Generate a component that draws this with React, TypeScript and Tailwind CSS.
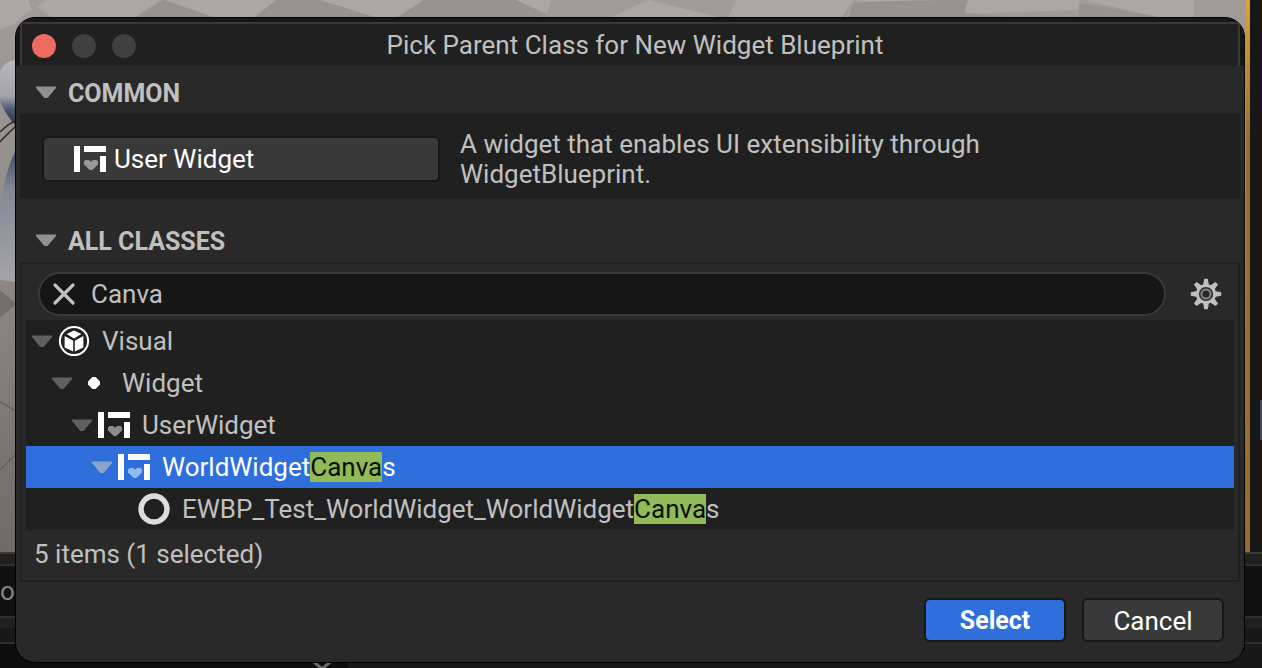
import { useState } from "react";
import type { ReactNode } from "react";

type IconKind = "visual" | "dot" | "widget" | "ring";

function Triangle({ className }: { className: string }) {
  return (
    <svg viewBox="0 0 20 13" className={`h-[13px] w-5 shrink-0 ${className}`} fill="currentColor" aria-hidden="true">
      <path d="M0 0.5H20V2L11.6 12H8.4L0 2Z" />
    </svg>
  );
}

function WidgetIcon({ heart }: { heart: string }) {
  return (
    <svg viewBox="0 0 32 26" className="h-[26px] w-8 shrink-0" aria-hidden="true">
      <path fill="#fff" d="M0 0H6V26H0ZM10 0H32V6H10ZM26 10H32V26H26Z" />
      <path
        className={heart}
        fill="currentColor"
        d="M11.4 14H15L17 15.8L19 14H22.6L24 15.6V18.4L18.2 24H15.8L10 18.4V15.6Z"
      />
    </svg>
  );
}

function VisualIcon() {
  return (
    <svg viewBox="0 0 32 32" className="size-8 shrink-0" aria-hidden="true">
      <circle cx="16" cy="16" r="14.1" fill="none" stroke="#fff" strokeWidth="2" />
      <path fill="#fff" d="M16 5.4L23.4 9L16 13.4L8.6 9Z" />
      <path fill="#fff" d="M6.6 11L15.2 15.8V26.6L6.6 22.4Z" />
      <path fill="#fff" d="M25.4 11L16.8 15.8V26.6L25.4 22.4Z" />
    </svg>
  );
}

function RowIcon({ kind, selected }: { kind: IconKind; selected: boolean }) {
  if (kind === "visual") return <VisualIcon />;
  if (kind === "widget") return <WidgetIcon heart={selected ? "text-[#8fbcf5]" : "text-[#8c8c8c]"} />;
  if (kind === "dot")
    return (
      <svg viewBox="0 0 32 32" className="size-8 shrink-0" aria-hidden="true">
        <path fill="#fff" d="M14.4 10H17.6L22 14.4V17.6L17.6 22H14.4L10 17.6V14.4Z" />
      </svg>
    );
  return (
    <svg viewBox="0 0 32 32" className="size-8 shrink-0" aria-hidden="true">
      <circle cx="16" cy="16" r="13" fill="none" stroke="#dedce0" strokeWidth="5.4" />
    </svg>
  );
}

function GearIcon() {
  const teeth = [0, 45, 90, 135, 180, 225, 270, 315];
  return (
    <svg viewBox="0 0 32 32" className="size-8" aria-hidden="true">
      <g fill="#c0c0c0">
        {teeth.map((a) => (
          <path key={a} transform={`rotate(${a} 16 16)`} d="M14.2 0.8H17.8L19 7.4H13Z" />
        ))}
      </g>
      <circle cx="16" cy="16" r="8.6" fill="#292929" stroke="#c0c0c0" strokeWidth="3" />
      <circle cx="16" cy="16" r="4.6" fill="none" stroke="#858585" strokeWidth="2" />
    </svg>
  );
}

const rows: { name: string; depth: string; icon: IconKind; leaf?: boolean }[] = [
  { name: "Visual", depth: "pl-[6px]", icon: "visual" },
  { name: "Widget", depth: "pl-[26px]", icon: "dot" },
  { name: "UserWidget", depth: "pl-[46px]", icon: "widget" },
  { name: "WorldWidgetCanvas", depth: "pl-[66px]", icon: "widget" },
  { name: "EWBP_Test_WorldWidget_WorldWidgetCanvas", depth: "pl-[86px]", icon: "ring", leaf: true },
];

function highlight(name: string, query: string): ReactNode {
  const at = query ? name.indexOf(query) : -1;
  if (at < 0) return name;
  return (
    <>
      {name.slice(0, at)}
      <mark className="inline-block h-[30px] bg-[#90bb58] leading-[30px] text-[#0c0f08]">{query}</mark>
      {name.slice(at + query.length)}
    </>
  );
}

function SectionHeader({ children }: { children: ReactNode }) {
  return (
    <h2>
      <button type="button" className="flex h-11 w-full items-center gap-3 pl-4 text-[25px] font-bold text-[#c0c0c0]">
        <Triangle className="text-[#909090]" />
        <span className="pt-[3px]">{children}</span>
      </button>
    </h2>
  );
}

function Backdrop() {
  return (
    <div className="absolute inset-0 flex flex-col overflow-hidden bg-[#111111]" aria-hidden="true">
      <div className="flex min-h-0 flex-1">
        <svg className="h-full min-w-0 flex-1" viewBox="0 0 1246 552" preserveAspectRatio="none">
          <defs>
            <linearGradient id="floor" x1="0" y1="0" x2="0" y2="1">
              <stop offset="0" stopColor="#a19c99" />
              <stop offset="0.5" stopColor="#8d8884" />
              <stop offset="1" stopColor="#6e6a67" />
            </linearGradient>
            <linearGradient id="ball" x1="0" y1="0" x2="0" y2="1">
              <stop offset="0" stopColor="#b9b9bb" />
              <stop offset="0.55" stopColor="#a2a3a8" />
              <stop offset="0.75" stopColor="#4b5672" />
              <stop offset="1" stopColor="#2a3145" />
            </linearGradient>
            <linearGradient id="body" x1="0" y1="0" x2="0" y2="1">
              <stop offset="0" stopColor="#3c4a6b" />
              <stop offset="0.3" stopColor="#858996" />
              <stop offset="1" stopColor="#a5a5a6" />
            </linearGradient>
          </defs>
          <rect width="1246" height="552" fill="url(#floor)" />
          <g fill="#aba7a4">
            <path d="M0 0H28L32 9L14 24L0 30Z" />
            <path d="M36 7L46 0H160L136 17H52Z" />
            <path d="M166 0H276L255 17H213Z" />
            <path d="M320 0H424L398 17H374Z" />
            <path d="M516 0H552L546 14Z" />
            <path d="M648 0L718 17H612Z" />
            <path d="M736 0H854L842 17H728Z" />
            <path d="M858 0H966L962 13L846 17Z" />
            <path d="M968 0H1080L1078 10L964 14Z" />
            <path d="M1086 0H1194V17H1158L1092 2Z" />
          </g>
          <g fill="#989390">
            <path d="M163 0L213 17H137Z" />
            <path d="M276 0H320L374 17H255Z" />
            <path d="M424 0H516L546 14L538 17H398Z" />
            <path d="M942 0H968L964 13L1010 17H848L854 2Z" />
            <path d="M1080 3L1158 17H1078Z" />
          </g>
          <path d="M16 60C4 60 0 72 0 72V100C4 112 12 122 16 126Z" fill="url(#ball)" />
          <path d="M0 132C6 126 12 122 16 121M0 142C5 136 12 130 16 126" stroke="#302f30" strokeWidth="1.5" fill="none" />
          <path d="M16 150C8 166 3 184 0 208V280L16 282Z" fill="url(#body)" />
          <path d="M0 290L16 304L0 318Z" fill="#736f6b" />
          <path d="M0 402L16 411M0 470L16 454" stroke="#66625e" strokeWidth="1.5" fill="none" />
        </svg>
        <div className="w-1 bg-linear-to-b from-[#dda23a] via-[#98702c] via-25% to-[#98702c]" />
        <div className="flex w-3 flex-col items-end bg-[#171717] pt-[400px]">
          <div className="h-10 w-[2px] bg-[#3c4c66]" />
        </div>
      </div>
      <div className="h-3.5 border-y-2 border-t-[#3a3a3a] border-b-[#303030] bg-[#202020]" />
      <div className="flex h-[50px] items-center bg-[#111111] text-[#858585]">o</div>
      <div className="h-3 border-t-2 border-[#303030] bg-[#202020]" />
      <div className="h-4 border-b-2 border-[#303030] bg-[#181818]" />
      <div className="flex h-6">
        <div className="flex w-[348px] items-end justify-end bg-[#0d0d0d] pr-4">
          <svg viewBox="0 0 20 6" className="h-1.5 w-5">
            <path d="M2 0L10 7L18 0" fill="none" stroke="#6a6a6a" strokeWidth="3" />
          </svg>
        </div>
        <div className="flex-1 bg-[#181818]" />
      </div>
    </div>
  );
}

export default function App() {
  const [query, setQuery] = useState("Canva");
  const [selected, setSelected] = useState("WorldWidgetCanvas");

  return (
    <div className="relative min-h-screen overflow-hidden bg-[#111111] pt-[17px] pr-[17px] pb-[5px] pl-[15px] font-[Roboto,sans-serif] text-[26px] leading-[30px] text-[#c0c0c0]">
      <Backdrop />
      <section
        role="dialog"
        aria-labelledby="dialog-title"
        className="relative overflow-hidden rounded-[20px] border border-black bg-[#292929]"
      >
        <header className="bg-[#171717] px-1 pt-1">
          <div className="grid h-11 grid-cols-[1fr_auto_1fr] items-center border-x-2 border-t-2 border-[#393939] bg-[#202020] pl-[10px]">
            <div className="flex gap-4 pt-[2px]">
              <button type="button" aria-label="Close" className="size-6 rounded-full bg-[#ed6b5f]" />
              <button type="button" aria-label="Minimize" disabled className="size-6 rounded-full bg-[#404040]" />
              <button type="button" aria-label="Zoom" disabled className="size-6 rounded-full bg-[#404040]" />
            </div>
            <h1 id="dialog-title">Pick Parent Class for New Widget Blueprint</h1>
          </div>
        </header>

        <div className="px-1 pt-1">
          <SectionHeader>COMMON</SectionHeader>
        </div>
        <div className="mx-1 flex items-center gap-5 bg-[#202020] px-[22px] pt-[15px] pb-[9px]">
          <button
            type="button"
            className="flex h-[46px] w-[398px] shrink-0 items-center gap-2 rounded-md border-2 border-[#171717] bg-[#393939] pr-2 pl-[30px] text-white"
          >
            <WidgetIcon heart="text-[#989898]" />
            User Widget
          </button>
          <p className="max-w-[560px]">A widget that enables UI extensibility through WidgetBlueprint.</p>
        </div>

        <div className="px-1 pt-5">
          <SectionHeader>ALL CLASSES</SectionHeader>
        </div>
        <div className="mx-1 border-2 border-[#202020] px-1 pt-2">
          <div className="mb-1 flex items-center gap-6 pr-3 pl-3">
            <div className="flex h-11 min-w-0 flex-1 items-center gap-4 rounded-full border-2 border-[#393939] bg-[#161616] pl-[13px]">
              <button type="button" aria-label="Clear search" onClick={() => setQuery("")}>
                <svg viewBox="0 0 22 22" className="size-[22px]" aria-hidden="true">
                  <path d="M2 2L20 20M20 2L2 20" stroke="#c0c0c0" strokeWidth="3.2" strokeLinecap="round" />
                </svg>
              </button>
              <input
                type="text"
                aria-label="Search classes"
                value={query}
                onChange={(e) => setQuery(e.target.value)}
                className="h-[30px] min-w-0 flex-1 bg-transparent outline-none"
              />
            </div>
            <button type="button" aria-label="View options">
              <GearIcon />
            </button>
          </div>
          <ul role="tree" className="bg-[#202020]">
            {rows.map((row) => {
              const on = row.name === selected;
              return (
                <li
                  key={row.name}
                  role="treeitem"
                  aria-selected={on}
                  onClick={() => setSelected(row.name)}
                  className={`flex h-[42px] items-center gap-[6px] ${row.depth} ${on ? "bg-[#2f6fdb] text-white" : ""}`}
                >
                  {row.leaf ? (
                    <span className="w-5 shrink-0" />
                  ) : (
                    <Triangle className={on ? "text-[#8aa4cc]" : "text-[#606060]"} />
                  )}
                  <RowIcon kind={row.icon} selected={on} />
                  <span className="pl-[6px] whitespace-nowrap">{highlight(row.name, query)}</span>
                </li>
              );
            })}
          </ul>
          <p className="flex h-[50px] items-center pb-[2px] pl-2">5 items (1 selected)</p>
        </div>

        <footer className="flex justify-end gap-4 px-5 pt-4 pb-5">
          <button
            type="button"
            className="h-11 w-[142px] rounded-md border-2 border-[#171717] bg-[#2f6fdb] pt-[2px] text-[25px] font-bold text-white"
          >
            Select
          </button>
          <button
            type="button"
            className="h-11 w-[142px] rounded-md border-2 border-[#171717] bg-[#393939] pt-[2px] text-white"
          >
            Cancel
          </button>
        </footer>
      </section>
    </div>
  );
}
